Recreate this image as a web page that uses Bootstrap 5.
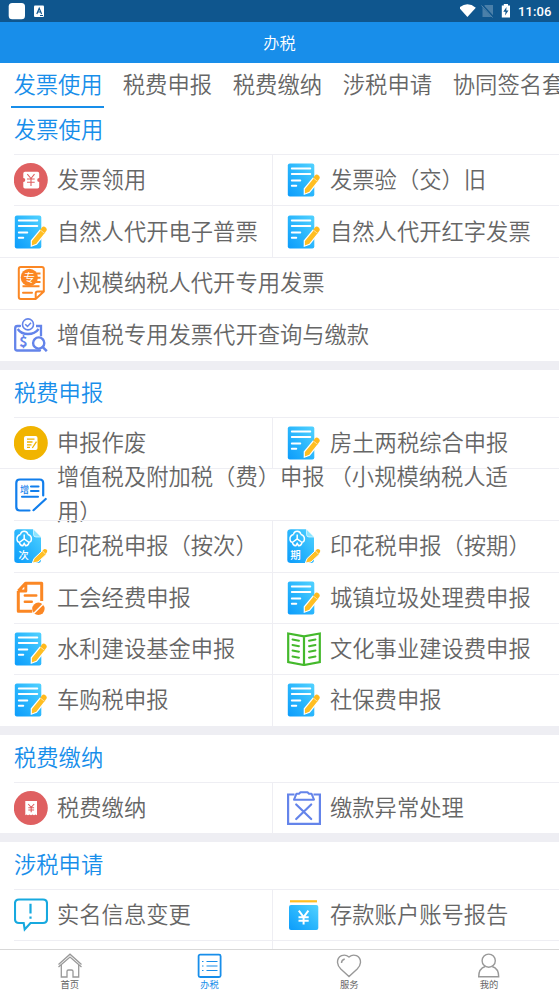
<!DOCTYPE html>
<html lang="zh-CN">
<head>
<meta charset="utf-8">
<meta name="viewport" content="width=device-width, initial-scale=1">
<title>办税</title>
<link href="https://cdn.jsdelivr.net/npm/bootstrap@5.3.0/dist/css/bootstrap.min.css" rel="stylesheet">
<style>
html,body{height:100%}
body{font-family:"Noto Sans CJK SC",sans-serif;font-weight:350;color:#666;background:#fff;font-size:22.3px;line-height:34px;overflow:hidden}
.app{height:995px}
.status{height:22px;background:#0f568e;color:#fff;font:500 13px/22px Roboto,sans-serif;flex:none}
.clock{margin-right:7.5px;padding-top:2px;letter-spacing:.1px}
.topbar{height:41px;background:#188eea;color:#fff;font-size:16.2px;flex:none;padding-bottom:1px}
.tabs{height:44.5px;padding-left:11px;gap:16px;flex:none}
.tabs a{color:#666;text-decoration:none;white-space:nowrap;padding:3px 2.4px 0;height:44.5px;width:94px;flex:none}
.tabs a+a{position:relative;left:-.6px}
.tabs a.on{color:#188eea;border-bottom:2px solid #188eea;width:93px;margin-right:1px}
.sect{height:46.8px;padding:4px 0 0 14px;color:#188eea}
.sect.first{height:46.5px;padding-top:3.5px}
.duo{height:51.35px}
.solo{height:52.05px;border-top:1px solid #eeeef3;padding-left:14px}
.cl{width:258.5px;margin-left:14px;border-top:1px solid #eeeef3;border-right:1px solid #eeeef3;flex:none}
.cr{border-top:1px solid #eeeef3;padding-left:14px}
.ic{width:34px;height:34px;flex:none;margin-right:9px}
.cr .ic{margin-right:9.5px}
.nm{white-space:nowrap;padding-bottom:4px}
.nm.wrap{white-space:normal;width:476px;line-height:35px}
.band{height:9.2px;background:#eeeef3}
.foot{height:46px;border-top:1px solid #d8d8d8;font-size:9.3px;line-height:12px;font-weight:400;flex:none;background:#fff}
.foot svg{width:26px;height:26px;margin-top:3px;margin-bottom:-1px}
.foot .on{color:#188eea}
svg text{font-family:"Noto Sans CJK SC",sans-serif}
</style>
<script src="https://cdn.jsdelivr.net/npm/bootstrap@5.3.0/dist/js/bootstrap.bundle.min.js"></script>
</head>
<body>
<svg width="0" height="0" class="position-absolute">
<defs>
<linearGradient id="bl" x1="1" y1="0" x2="0" y2="1"><stop offset="0" stop-color="#52d2ff"/><stop offset=".5" stop-color="#2ab6fd"/><stop offset="1" stop-color="#0c9cfb"/></linearGradient>
<symbol id="note" viewBox="0 0 34 34">
<rect x=".8" y=".5" width="26.5" height="33" rx="2" fill="url(#bl)"/>
<path d="M4.800 5.500H23.300M4.800 11H23.300M4.800 17.500H13.300M4.800 22.700H9.300" stroke="#fff" stroke-width="1.900" stroke-linecap="round"/>
<path d="M26.300 14.800 17.300 25.800 17.300 31.200 22.500 29.300 31.200 18.500" fill="#ffbe22" stroke="#fff" stroke-width="1.200"/>
<path d="M26.300 14.700 27.900 12.500Q29 11 30.700 11.800L32 12.800Q33.400 14.200 32.500 15.600L30.700 18.200z" fill="#ffb91d"/>
<path d="M26 14.900 30.800 18.500" stroke="#ffdf91" stroke-width=".9"/>
</symbol>
<symbol id="ticket" viewBox="0 0 34 34"><circle cx="16.800" cy="17" r="17" fill="#df6061"/>
<path d="M11 8.800h12.500q1.700 0 1.700 1.700V15a2 2 0 0 0 0 4v4.700q0 1.700-1.700 1.700H11q-1.700 0-1.700-1.700V19a2 2 0 0 0 0-4v-4.500Q9.300 8.800 11 8.800z" fill="#fff"/><path d="M13.300 11.200 17 15.500 20.500 11.200M17 15.500V23M13 16h7.700M13 19.200h7.700" fill="none" stroke="#df6061" stroke-width="1.100"/></symbol>
<symbol id="bill" viewBox="0 0 34 34"><circle cx="16.800" cy="17" r="17" fill="#df6061"/>
<path d="M11.300 10h11.700v14.200l-1.500-.8-1.500.8-1.500-.8-1.500.8-1.500-.8-1.500.8-1.500-.8-1.200.8z" fill="#fff"/><path d="m14.200 13 3 3.300 3-3.300M17.200 16.300v5M14.300 16.800h5.800M14.300 19h5.800" fill="none" stroke="#df6061" stroke-width="1.100"/></symbol>
<symbol id="void" viewBox="0 0 34 34"><circle cx="16.800" cy="17" r="17" fill="#f1b400"/><rect x="10" y="10" width="13.500" height="14" rx="2" fill="#fff"/><path d="M13 13.200h7.500M13 16h5.500M13 18.800h4.500M13 21.400h3M22.500 15.600 18.300 22" stroke="#f1b400" stroke-width="1.300"/></symbol>
<symbol id="special" viewBox="0 0 34 34"><path d="M21.700 33H6.800q-2 0-2-2V3q0-2 2-2h21q2 0 2 2v22.500zM21.700 33v-5.500q0-2 2-2h6M9 26.700h9" fill="none" stroke="#fb8724" stroke-width="2" stroke-linecap="round"/><path d="M8.500 20.300h17M22 7.400h4.500M23 11.700h3.500M22 16h4.500" stroke="#fb8724" stroke-width="2"/><circle cx="15.300" cy="11.400" r="8.600" fill="#fb8724"/><text x="15.300" y="15.600" font-size="11.500" font-weight="400" text-anchor="middle" fill="#fff">专</text></symbol>
<symbol id="query" viewBox="0 0 34 34"><path d="M6 8H3.500Q1.200 8 1.200 10.200V30.500q0 2 2 2H26" fill="none" stroke="#6484ea" stroke-width="2.300" stroke-linecap="round"/><path d="M22 8h5v10.200M3.700 11Q7 16 14 16T24.600 11" fill="none" stroke="#6484ea" stroke-width="2.300"/><circle cx="14" cy="6.400" r="5.500" fill="#fff" stroke="#6484ea" stroke-width="1.600"/><path d="m11.200 6.200 2.300 2.200 3.500-3.600" fill="none" stroke="#6484ea" stroke-width="1.500"/><text x="9.500" y="28.700" font-size="14" font-weight="700" text-anchor="middle" fill="#6484ea">$</text><circle cx="24.700" cy="25" r="5.600" fill="#fff" stroke="#6484ea" stroke-width="2.400"/><path d="m28.800 29.200 4 4" stroke="#6484ea" stroke-width="2.500"/></symbol>
<symbol id="vat" viewBox="0 0 34 34"><path d="M29.200 17.500V5q0-3.500-3.500-3.500H5.800Q2.300 1.500 2.300 5v24q0 3.500 3.500 3.500H15.500M19.500 32.200 31.700 21" fill="none" stroke="#117eec" stroke-width="2.200" stroke-linecap="round"/><path d="M17 8.500h7.500M17 13h7.500M8 18.800h16" stroke="#117eec" stroke-width="2.100" stroke-linecap="round"/><text x="10.600" y="14.800" font-size="9" font-weight="500" text-anchor="middle" fill="#117eec">增</text></symbol>
<g id="stamp"><path d="M4 .3h15l8 8V31q0 3-3 3H4q-3.700 0-3.700-3V3.500Q.3.300 4 .3z" fill="url(#bl)"/><path d="M19.500.3 27.200 8H22q-2.500 0-2.500-2.500z" fill="#8ce5ff" stroke="#fff" stroke-width=".6"/><path d="M10.200 9.800 6 13M10.200 9.800l4.200 3.200M10.200 9.800V5.500M6.500 5.500Q7 2.200 10.200 2.200T13.900 5.500M6.500 5.500Q2.800 6.500 3 10.200 3.200 13 5.300 13.200 6 17 8.800 16.700L10.200 14.500l1.400 2.200Q14.500 17 15.100 13.200 17.200 13 17.400 10.200 17.600 6.500 13.900 5.500" fill="none" stroke="#fff" stroke-width="1.500"/><path d="m18.300 34 1.800-4.500 8.300-7.800 3.800 3.800L24 33z" fill="#ffc027" stroke="#fff" stroke-width="1"/><path d="m28.500 21.500 1.500-1.300q1.200-.8 2.500.4 1.400 1.400.5 2.500l-1.300 1.800z" fill="#ffb91d"/></g>
<symbol id="st1" viewBox="0 0 34 34"><use href="#stamp"/><text x="9.500" y="29.500" font-size="10.200" font-weight="500" text-anchor="middle" fill="#fff">次</text></symbol>
<symbol id="st2" viewBox="0 0 34 34"><use href="#stamp"/><text x="8.500" y="29.500" font-size="10.500" font-weight="500" text-anchor="middle" fill="#fff">期</text></symbol>
<symbol id="union" viewBox="0 0 34 34"><path d="M4.300 10 11.500 2.200H27.700V20M4.300 10V30.300H18.300M11.800 2.500V10H4.500" fill="none" stroke="#fb8724" stroke-width="3" stroke-linejoin="round"/><path d="M10.800 14.500h11.500M10.800 20.700h7" stroke="#fb8724" stroke-width="2.400" stroke-linecap="round"/><circle cx="24.400" cy="27.800" r="6.200" fill="#fb8724"/><path d="m19.700 32.500 9.500-9.500" stroke="#fff" stroke-width="1.400"/></symbol>
<symbol id="book" viewBox="0 0 34 34"><path d="M17 4.300 1.200 1.500v28.700L17 33l15.800-2.800V1.500zV33" fill="none" stroke="#44b92c" stroke-width="2.200"/><path d="m5.500 7.500 6.500 1.300M5.500 13l6.500 1.200M5.500 18.500l6.500 1.200M5.500 24.500l6.500 1.200M28.500 7.500 22 8.800M28.500 13 22 14.200M28.500 18.500 22 19.700M28.500 24.500 22 25.700" stroke="#44b92c" stroke-width="1.900" stroke-linecap="round"/></symbol>
<symbol id="clip" viewBox="0 0 34 34"><path d="M7.500 3.500H1.100V32.900H32.900V3.500H26.500" fill="none" stroke="#6484ea" stroke-width="2.200"/><path d="m7 8.700 2.500-6H12l1.500-1.500h7L22 2.700h2.500l2.500 6z" fill="#fff" stroke="#6484ea" stroke-width="2" stroke-linejoin="round"/><path d="m9.200 13.500 15 14.500M24.200 13.500l-15 14.500" stroke="#6484ea" stroke-width="2.200" stroke-linecap="round"/></symbol>
<symbol id="talk" viewBox="0 0 34 34"><path d="M5 1.500h24q4 0 4 4V21q0 4-4 4H16.500L10.700 31.500 9.700 25H5q-4 0-4-4V5.500q0-4 4-4z" fill="none" stroke="#17a9df" stroke-width="2.100"/><path d="M16.500 5.800V15.500M16.500 18.500v2.200" stroke="#17a9df" stroke-width="2.200"/></symbol>
<symbol id="money" viewBox="0 0 34 34"><path d="M3 3.300h27" stroke="#ffbe22" stroke-width="2.200"/><rect x="2" y="7" width="29.300" height="25" rx="2" fill="url(#bl)"/><path d="m11.800 12.700 4.800 6.300 4.800-6.300M16.600 19v7.500M11.500 19.200h10.200M11.500 22.800h10.200" fill="none" stroke="#fff" stroke-width="2"/></symbol>
</defs></svg>

<div class="app d-flex flex-column overflow-hidden">
<div class="status d-flex align-items-center">
<svg width="50" height="22"><rect x="8.700" y="3" width="16.300" height="16.300" rx="3.500" fill="#fff"/><rect x="34" y="5.500" width="10" height="11.500" rx="1" fill="#fff"/><path d="m36.800 14 2.400-5.700 2.400 5.700M37.800 12h2.800M40 15.500h3" fill="none" stroke="#0f568e" stroke-width="1.200"/></svg>
<svg class="ms-auto" width="58" height="22"><path d="M-1 7.700Q7.400.8 15.800 7.700L7.400 17z" fill="#fff"/><path d="M25 5h8v12H22.500V7.500z" fill="#4a7fa9"/><path d="m22 5 11 12" stroke="#0f568e" stroke-width="2.400"/><path d="m21.500 5.500 11 12" stroke="#5b8ab0" stroke-width="1"/><path d="M41.800 5.500h2V4h4.200v1.500h2v12h-8.200z" fill="#fff"/><path d="m46.500 7-3.200 4.800h2.300L45 15.500l3.500-5h-2.200z" fill="#0f568e"/></svg>
<span class="clock">11:06</span>
</div>
<header class="topbar d-flex align-items-center justify-content-center">办税</header>
<nav class="tabs d-flex"><a class="on" href="#">发票使用</a><a href="#">税费申报</a><a href="#">税费缴纳</a><a href="#">涉税申请</a><a href="#">协同签名套餐</a></nav>
<main class="flex-grow-1 overflow-hidden" style="min-height:0">
<section>
<div class="sect first">发票使用</div>
<div class="duo d-flex"><div class="cl d-flex align-items-center"><svg class="ic"><use href="#ticket"/></svg><span class="nm">发票领用</span></div><div class="cr d-flex align-items-center flex-fill"><svg class="ic"><use href="#note"/></svg><span class="nm">发票验（交）旧</span></div></div>
<div class="duo d-flex"><div class="cl d-flex align-items-center"><svg class="ic"><use href="#note"/></svg><span class="nm">自然人代开电子普票</span></div><div class="cr d-flex align-items-center flex-fill"><svg class="ic"><use href="#note"/></svg><span class="nm">自然人代开红字发票</span></div></div>
<div class="solo d-flex align-items-center"><svg class="ic"><use href="#special"/></svg><span class="nm">小规模纳税人代开专用发票</span></div>
<div class="solo d-flex align-items-center"><svg class="ic"><use href="#query"/></svg><span class="nm">增值税专用发票代开查询与缴款</span></div>
</section>
<div class="band"></div>
<section>
<div class="sect">税费申报</div>
<div class="duo d-flex"><div class="cl d-flex align-items-center"><svg class="ic"><use href="#void"/></svg><span class="nm">申报作废</span></div><div class="cr d-flex align-items-center flex-fill"><svg class="ic"><use href="#note"/></svg><span class="nm">房土两税综合申报</span></div></div>
<div class="solo d-flex align-items-center"><svg class="ic"><use href="#vat"/></svg><span class="nm wrap">增值税及附加税（费）申报 （小规模纳税人适用）</span></div>
<div class="duo d-flex"><div class="cl d-flex align-items-center"><svg class="ic"><use href="#st1"/></svg><span class="nm">印花税申报（按次）</span></div><div class="cr d-flex align-items-center flex-fill"><svg class="ic"><use href="#st2"/></svg><span class="nm">印花税申报（按期）</span></div></div>
<div class="duo d-flex"><div class="cl d-flex align-items-center"><svg class="ic"><use href="#union"/></svg><span class="nm">工会经费申报</span></div><div class="cr d-flex align-items-center flex-fill"><svg class="ic"><use href="#note"/></svg><span class="nm">城镇垃圾处理费申报</span></div></div>
<div class="duo d-flex"><div class="cl d-flex align-items-center"><svg class="ic"><use href="#note"/></svg><span class="nm">水利建设基金申报</span></div><div class="cr d-flex align-items-center flex-fill"><svg class="ic"><use href="#book"/></svg><span class="nm">文化事业建设费申报</span></div></div>
<div class="duo d-flex"><div class="cl d-flex align-items-center"><svg class="ic"><use href="#note"/></svg><span class="nm">车购税申报</span></div><div class="cr d-flex align-items-center flex-fill"><svg class="ic"><use href="#note"/></svg><span class="nm">社保费申报</span></div></div>
</section>
<div class="band"></div>
<section>
<div class="sect">税费缴纳</div>
<div class="duo d-flex"><div class="cl d-flex align-items-center"><svg class="ic"><use href="#bill"/></svg><span class="nm">税费缴纳</span></div><div class="cr d-flex align-items-center flex-fill"><svg class="ic"><use href="#clip"/></svg><span class="nm">缴款异常处理</span></div></div>
</section>
<div class="band"></div>
<section>
<div class="sect">涉税申请</div>
<div class="duo d-flex"><div class="cl d-flex align-items-center"><svg class="ic"><use href="#talk"/></svg><span class="nm">实名信息变更</span></div><div class="cr d-flex align-items-center flex-fill"><svg class="ic"><use href="#money"/></svg><span class="nm">存款账户账号报告</span></div></div>
<div class="duo d-flex"><div class="cl"></div><div class="cr flex-fill"></div></div>
</section>
</main>
<footer class="foot d-flex text-center">
<div class="col d-flex flex-column align-items-center"><svg viewBox="0 0 26 26" fill="none" stroke="#999" stroke-width="1.300"><path d="M1.500 11.500 13 1.200 24.500 11.500M1.500 14 13 4 24.500 14"/><path d="M4.300 12V24H10V18.300Q10 17 11.500 17h3Q16 17 16 18.300V24h5.700V12"/></svg>首页</div>
<div class="col d-flex flex-column align-items-center on"><svg viewBox="0 0 26 26" fill="none" stroke="#188eea"><rect x="1.600" y="1.700" width="22" height="22.300" rx="1.500" stroke-width="1.800"/><path d="M9.500 8.500h11M9.500 13h11M9.500 17.500h11M5 8.500h1.500M5 13h1.500M5 17.500h1.500" stroke-width="1.200"/></svg>办税</div>
<div class="col d-flex flex-column align-items-center"><svg viewBox="0 0 26 26" fill="none" stroke="#999" stroke-width="1.400"><path d="M13 4Q9.500 1 5.500 2.700 1.300 4.700 1.500 9.500 1.800 13 4.800 16L13 23.500 21.200 16Q24.200 13 24.500 9.500 24.700 4.700 20.500 2.700 16.500 1 13 4zM5.500 10Q5.500 7 8.700 6"/></svg>服务</div>
<div class="col d-flex flex-column align-items-center"><svg viewBox="0 0 26 26" fill="none" stroke="#999" stroke-width="1.400"><circle cx="12.700" cy="7.700" r="6.600"/><path d="M9.200 13.500Q2.700 15.500 2.700 23.800h20Q22.700 15.500 16.200 13.500"/></svg>我的</div>
</footer>
</div>
</body>
</html>
